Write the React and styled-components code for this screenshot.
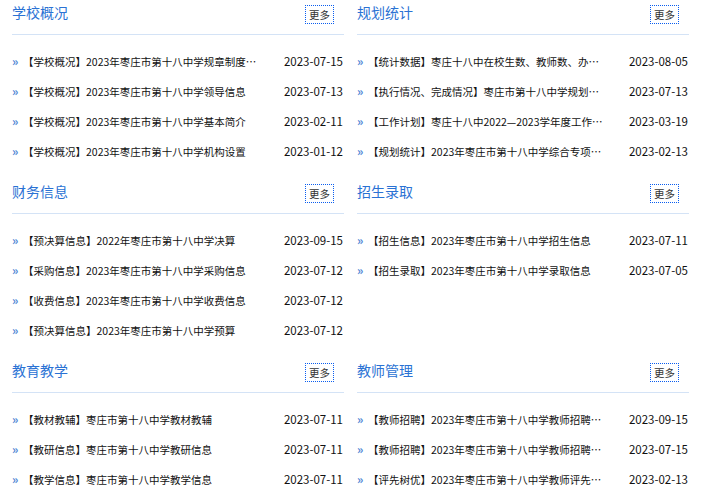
import styled, { createGlobalStyle } from "styled-components";

const GlobalStyle = createGlobalStyle`
  body {
    margin: 0;
    background: #fff;
    font-family: "Noto Sans CJK SC", "Noto Sans", sans-serif;
    color: #111;
  }
`;

const Page = styled.div`
  display: grid;
  grid-template-columns: 332px 332px;
  column-gap: 13px;
  padding-left: 12px;
  height: 490px;
  overflow: hidden;
`;

const Section = styled.section`
  height: 179px;
`;

const Header = styled.div`
  display: flex;
  justify-content: space-between;
  align-items: flex-start;
  height: 34px;
  border-bottom: 1px solid #d4e3f6;
`;

const Title = styled.h2`
  margin: 0;
  font-size: 14px;
  font-weight: normal;
  line-height: 24px;
  color: #2a72d4;
`;

const More = styled.a`
  margin: 5px 10px 0 0;
  width: 27px;
  height: 17px;
  border: 1px dotted #0a5ef0;
  font-size: 10.5px;
  line-height: 17px;
  text-align: center;
  color: #333;
  text-decoration: none;
`;

const List = styled.ul`
  list-style: none;
  margin: 0;
  padding: 11px 0 0;
`;

const Row = styled.li`
  display: flex;
  align-items: center;
  height: 30px;
  font-size: 10.5px;
`;

const Arrow = styled.span`
  width: 11px;
  color: #4f86d4;
  font-size: 12px;
  font-weight: bold;
  line-height: 1;
`;

const Text = styled.span`
  width: 240px;
  white-space: nowrap;
  overflow: hidden;
  text-overflow: ellipsis;
`;

const Date = styled.span`
  margin-left: auto;
  margin-right: 1px;
  font-size: 11.5px;
`;

const sections = [
  {
    title: "学校概况",
    items: [
      ["【学校概况】2023年枣庄市第十八中学规章制度汇编", "2023-07-15"],
      ["【学校概况】2023年枣庄市第十八中学领导信息", "2023-07-13"],
      ["【学校概况】2023年枣庄市第十八中学基本简介", "2023-02-11"],
      ["【学校概况】2023年枣庄市第十八中学机构设置", "2023-01-12"],
    ],
  },
  {
    title: "规划统计",
    items: [
      ["【统计数据】枣庄十八中在校生数、教师数、办学条件", "2023-08-05"],
      ["【执行情况、完成情况】枣庄市第十八中学规划执行", "2023-07-13"],
      ["【工作计划】枣庄十八中2022—2023学年度工作计划", "2023-03-19"],
      ["【规划统计】2023年枣庄市第十八中学综合专项规划", "2023-02-13"],
    ],
  },
  {
    title: "财务信息",
    items: [
      ["【预决算信息】2022年枣庄市第十八中学决算", "2023-09-15"],
      ["【采购信息】2023年枣庄市第十八中学采购信息", "2023-07-12"],
      ["【收费信息】2023年枣庄市第十八中学收费信息", "2023-07-12"],
      ["【预决算信息】2023年枣庄市第十八中学预算", "2023-07-12"],
    ],
  },
  {
    title: "招生录取",
    items: [
      ["【招生信息】2023年枣庄市第十八中学招生信息", "2023-07-11"],
      ["【招生录取】2023年枣庄市第十八中学录取信息", "2023-07-05"],
    ],
  },
  {
    title: "教育教学",
    items: [
      ["【教材教辅】枣庄市第十八中学教材教辅", "2023-07-11"],
      ["【教研信息】枣庄市第十八中学教研信息", "2023-07-11"],
      ["【教学信息】枣庄市第十八中学教学信息", "2023-07-11"],
    ],
  },
  {
    title: "教师管理",
    items: [
      ["【教师招聘】2023年枣庄市第十八中学教师招聘公告", "2023-09-15"],
      ["【教师招聘】2023年枣庄市第十八中学教师招聘简章", "2023-07-15"],
      ["【评先树优】2023年枣庄市第十八中学教师评先树优", "2023-02-13"],
    ],
  },
];

export default function App() {
  return (
    <>
      <GlobalStyle />
      <Page>
        {sections.map((s) => (
          <Section key={s.title}>
            <Header>
              <Title>{s.title}</Title>
              <More href="#">更多</More>
            </Header>
            <List>
              {s.items.map(([text, date], i) => (
                <Row key={i}>
                  <Arrow>»</Arrow>
                  <Text>{text}</Text>
                  <Date>{date}</Date>
                </Row>
              ))}
            </List>
          </Section>
        ))}
      </Page>
    </>
  );
}
